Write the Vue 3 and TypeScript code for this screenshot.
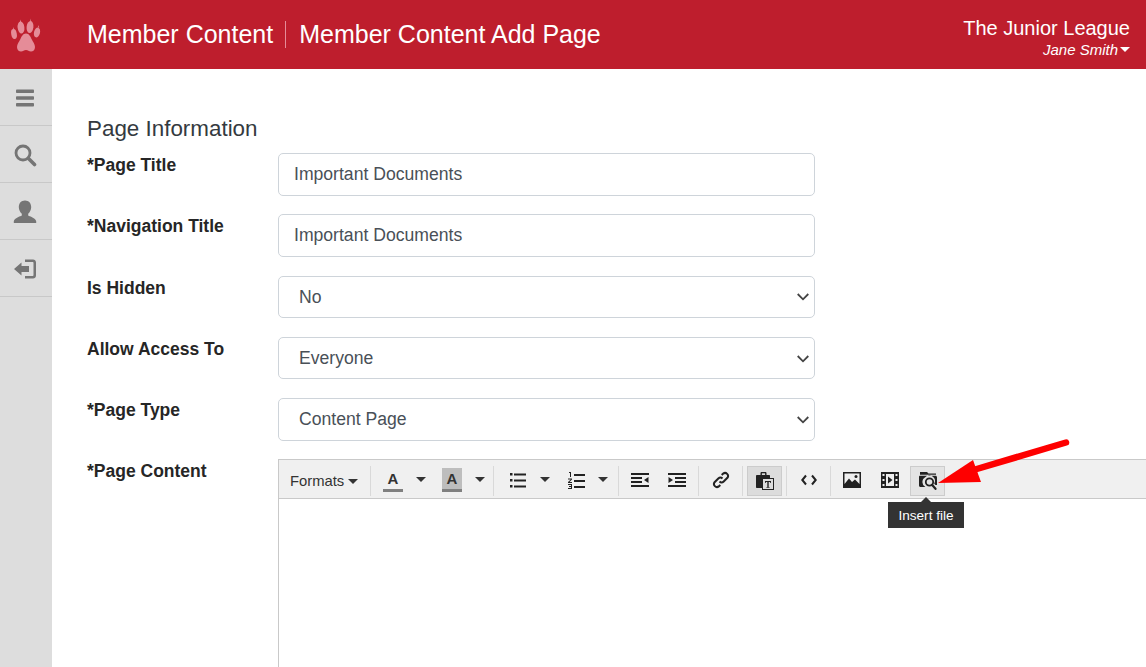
<script setup lang="ts">
interface Field { label: string; value: string; kind: 'input' | 'select' }
const fields: Field[] = [
  { label: '*Page Title', value: 'Important Documents', kind: 'input' },
  { label: '*Navigation Title', value: 'Important Documents', kind: 'input' },
  { label: 'Is Hidden', value: 'No', kind: 'select' },
  { label: 'Allow Access To', value: 'Everyone', kind: 'select' },
  { label: '*Page Type', value: 'Content Page', kind: 'select' },
]
</script>

<template>
  <div class="page">
    <header class="topbar">
      <div class="logo">
        <svg width="32" height="36" viewBox="0 0 32 36" fill="#e58c98">
          <ellipse cx="4" cy="17" rx="2.800" ry="5" transform="rotate(-10 4 17)"/>
          <ellipse cx="11" cy="10.500" rx="3.400" ry="6" transform="rotate(-6 11 10.500)"/>
          <ellipse cx="20" cy="10" rx="3.400" ry="6" transform="rotate(6 20 10)"/>
          <ellipse cx="27" cy="15.500" rx="3" ry="5" transform="rotate(14 27 15.500)"/>
          <path d="M16 16.500c3 0 4.500 3 5.800 6 1.100 2.500 3.200 4.500 3.200 7.500 0 3-2 4.500-4 4.500-2.200 0-3-1.600-5-1.600s-2.800 1.600-5 1.600c-2 0-4-1.500-4-4.500 0-3 2.100-5 3.200-7.500 1.300-3 2.800-6 5.800-6z"/>
          <path d="M3 12.500l.6-2.500.6 2.500zM10 5l.6-2.500.6 2.500zM20 4.500l.5-3 .5 3zM28 10.500l.6-2.500.6 2.500z"/>
        </svg>
      </div>
      <div class="crumbs">
        <span>Member Content</span>
        <span class="divider"></span>
        <span>Member Content Add Page</span>
      </div>
      <div class="account">
        <div class="org">The Junior League</div>
        <div class="user">Jane Smith<i class="caret"></i></div>
      </div>
    </header>

    <div class="body">
      <nav class="rail">
        <div class="rail-item">
          <svg width="20" height="20" viewBox="0 0 20 20" fill="#757575">
            <rect x="1" y="1.500" width="18" height="3.500" rx=".8"/>
            <rect x="1" y="8.300" width="18" height="3.500" rx=".8"/>
            <rect x="1" y="15" width="18" height="3.500" rx=".8"/>
          </svg>
        </div>
        <div class="rail-item">
          <svg width="24" height="24" viewBox="0 0 24 24" fill="none" stroke="#757575">
            <circle cx="10" cy="10" r="7" stroke-width="2.800"/>
            <path d="M15.500 15.500l6 6" stroke-width="3.600" stroke-linecap="round"/>
          </svg>
        </div>
        <div class="rail-item">
          <svg width="24" height="24" viewBox="0 0 24 24" fill="#757575">
            <path d="M12 .500c3.800 0 6.200 2.800 6.200 6.500 0 2.800-1.300 5.300-3 6.700v1.800c1.500 1 7.300 2.200 8 5.800v1.700H.800v-1.700c.7-3.600 6.500-4.800 8-5.800v-1.800c-1.700-1.400-3-3.900-3-6.700C5.800 3.300 8.200.500 12 .500z"/>
          </svg>
        </div>
        <div class="rail-item">
          <svg width="24" height="24" viewBox="0 0 24 24" fill="#757575">
            <path d="M12 2.500h8c1.700 0 3 1.300 3 3v13c0 1.700-1.300 3-3 3h-8v-2.500h7.500c.6 0 1-.4 1-1V6c0-.6-.4-1-1-1H12z"/>
            <path d="M1 12l7.500-6.500V9H16v6H8.500v3.500z"/>
          </svg>
        </div>
      </nav>

      <main class="content">
        <h2 class="section">Page Information</h2>
        <div v-for="f in fields" :key="f.label" class="row">
          <label class="label">{{ f.label }}</label>
          <div class="control" :class="{ sel: f.kind === 'select' }">
            <span>{{ f.value }}</span>
            <svg v-if="f.kind === 'select'" class="chev" width="12" height="8" viewBox="0 0 12 8" fill="none" stroke="#444" stroke-width="1.800">
              <path d="M.7 1L6 6.300 11.300 1"/>
            </svg>
          </div>
        </div>

        <div class="row editor-row">
          <label class="label">*Page Content</label>
          <div class="editor">
            <div class="toolbar">
              <span class="formats">Formats<i class="tcaret fm"></i></span>
              <span class="sep"></span>

              <span class="color c-a"><b>A</b><i></i></span>
              <i class="tcaret m13"></i>
              <span class="color shade m16"><b>A</b><i></i></span>
              <i class="tcaret m13"></i>
              <span class="sep m8"></span>

              <span class="tool w16 m16">
                <svg width="16" height="16" viewBox="0 0 16 16" fill="#222">
                  <rect x="0" y="1" width="2.500" height="2.500"/><rect x="0" y="7" width="2.500" height="2.500"/><rect x="0" y="13" width="2.500" height="2.500"/>
                  <rect x="4" y="1.500" width="12" height="2"/><rect x="4" y="7.500" width="12" height="2"/><rect x="4" y="13.500" width="12" height="2"/>
                </svg>
              </span>
              <i class="tcaret m14"></i>
              <span class="tool w17 m18">
                <svg width="17" height="17" viewBox="0 0 17 17" fill="#222">
                  <rect x="6" y="2" width="11" height="2"/><rect x="6" y="8" width="11" height="2"/><rect x="6" y="14" width="11" height="2"/>
                  <path d="M1 0h2v5H2V1H1zM0 6.500h4v1L1.500 10H4v1H0v-1l2.800-2.500H0zM0 12h4v5H0v-1h3v-1H1v-1h2v-1H0z"/>
                </svg>
              </span>
              <i class="tcaret m13"></i>
              <span class="sep m10"></span>

              <span class="tool w18 m12">
                <svg width="18" height="14" viewBox="0 0 18 14" fill="#222">
                  <rect y="0" width="18" height="2"/><rect y="4" width="11" height="2"/><rect y="8" width="11" height="2"/><rect y="12" width="18" height="2"/>
                  <path d="M17.500 4v6L13 7z"/>
                </svg>
              </span>
              <span class="tool w18 m19">
                <svg width="18" height="14" viewBox="0 0 18 14" fill="#222">
                  <rect y="0" width="18" height="2"/><rect x="7" y="4" width="11" height="2"/><rect x="7" y="8" width="11" height="2"/><rect y="12" width="18" height="2"/>
                  <path d="M.5 4v6L5 7z"/>
                </svg>
              </span>
              <span class="sep m12"></span>

              <span class="tool w18 m13">
                <svg width="18" height="18" viewBox="0 0 18 18" fill="none" stroke="#222" stroke-width="2">
                  <path d="M7.500 10.500a3 3 0 0 0 4.200 0l3.700-3.700a3 3 0 0 0-4.200-4.200L9.700 4"/>
                  <path d="M10.500 7.500a3 3 0 0 0-4.200 0l-3.700 3.700a3 3 0 0 0 4.200 4.200L8.300 14"/>
                </svg>
              </span>
              <span class="sep m12"></span>

              <span class="boxed active m4">
                <svg width="18" height="18" viewBox="0 0 18 18">
                  <path d="M1 3h3.500V1.200C4.500.6 5 0 5.600 0h3.800c.6 0 1.100.6 1.100 1.200V3H13c.8 0 1 .5 1 1v2H6v10H1c-.6 0-1-.4-1-1V4c0-.5.4-1 1-1z" fill="#222"/>
                  <rect x="5.900" y="1.300" width="3.200" height="1.700" fill="#dcdcdc"/>
                  <rect x="6.500" y="6.500" width="11" height="11" fill="#dcdcdc" stroke="#222"/>
                  <path d="M9 9h6v2h-.8v-1h-1.500v5H13.500v.8h-3V15h.8v-5H9.800v1H9z" fill="#222"/>
                </svg>
              </span>
              <span class="sep m4"></span>

              <span class="tool w16 m14">
                <svg width="16" height="12" viewBox="0 0 16 12" fill="none" stroke="#222" stroke-width="2">
                  <path d="M5 1.500L1.300 6 5 10.500M11 1.500L14.700 6 11 10.500"/>
                </svg>
              </span>
              <span class="sep m13"></span>

              <span class="tool w18 m12">
                <svg width="18" height="16" viewBox="0 0 18 16" fill="#222">
                  <path d="M0 0h18v16H0zM1.500 1.500v10.500l4.500-5.500 3 3.500 3-2.500 4.500 4.500V1.500z" fill-rule="evenodd"/>
                  <circle cx="13" cy="4.500" r="1.500"/>
                </svg>
              </span>
              <span class="tool w18 m20">
                <svg width="18" height="16" viewBox="0 0 18 16" fill="#222">
                  <path fill-rule="evenodd" d="M0 0h18v16H0zM1.500 2v2h2V2zM1.500 7v2h2V7zM1.500 12v2h2v-2zM14.500 2v2h2V2zM14.500 7v2h2V7zM14.500 12v2h2v-2zM5 2v12h8V2z"/>
                  <path d="M7 4.500v7L11.500 8z"/>
                </svg>
              </span>
              <span class="boxed hover m11">
                <svg width="18" height="18" viewBox="0 0 18 18" fill="#222">
                  <path d="M1 0h7l1.500 1.500H17v1.200H1z"/>
                  <path d="M1 3.800h15.500c.8 0 1.500.7 1.500 1.500V13h-1.500l-1.300-1.300a5.600 5.600 0 0 0-9-6.500 5.600 5.600 0 0 0 .2 9.800H1.500C.7 15 0 14.300 0 13.500V5c0-.7.4-1.200 1-1.200z"/>
                  <circle cx="10.500" cy="10" r="3.700" fill="#e4e4e4" stroke="#222" stroke-width="1.800"/>
                  <path d="M13 12.800l3.500 4" stroke="#222" stroke-width="2.200" stroke-linecap="round"/>
                </svg>
              </span>
              <div class="tip">Insert file</div>
            </div>
            <div class="edit-area"></div>
          </div>
        </div>
      </main>
    </div>

    <svg class="arrow" width="150" height="60" viewBox="0 0 150 60">
      <path d="M130 6.500L34 35" stroke="#fe0000" stroke-width="6.500" stroke-linecap="round" fill="none"/>
      <path d="M2 47L37 24l8 22z" fill="#fe0000"/>
    </svg>
  </div>
</template>

<style>
html, body { margin: 0; padding: 0; background: #fff; overflow: hidden; }
</style>

<style scoped>
.page { position: relative; width: 1146px; height: 667px; overflow: hidden; font-family: "Liberation Sans", Arial, sans-serif; color: #212529; }
.topbar { height: 69px; background: #be1e2d; color: #fff; display: flex; align-items: center; }
.logo { width: 87px; flex: none; display: flex; padding-left: 10px; box-sizing: border-box; }
.crumbs { display: flex; align-items: center; font-size: 25px; flex: 1; }
.divider { width: 1px; height: 27px; background: #e58c98; margin: 0 13px 0 12px; }
.account { text-align: right; padding-right: 16px; padding-top: 5px; }
.org { font-size: 20px; line-height: 24px; }
.user { font-size: 15px; font-style: italic; line-height: 18px; margin-top: 1px; display: flex; justify-content: flex-end; align-items: center; }
.caret { width: 0; height: 0; border: 5px solid transparent; border-top-color: #fff; border-bottom: 0; margin-left: 2px; }
.body { display: flex; height: 598px; }
.rail { width: 52px; flex: none; background: #ddd; }
.rail-item { height: 56px; border-bottom: 1px solid #c8c8c8; display: flex; align-items: center; justify-content: center; padding-right: 2px; }
.rail-item svg { margin-top: 2px; }
.content { flex: 1; padding: 45px 0 0 35px; min-width: 0; }
.section { font-size: 22.400px; font-weight: 400; line-height: 29px; margin: 0 0 10px; color: #343a40; height: 29px; }
.row { display: flex; margin-bottom: 18.300px; }
.label { width: 191px; flex: none; font-weight: 700; font-size: 17.500px; line-height: 24px; color: #262626; }
.control { width: 537px; height: 43px; box-sizing: border-box; border: 1px solid #ced4da; border-radius: 5px; display: flex; align-items: center; padding: 0 15px; font-size: 17.600px; color: #495057; }
.control.sel { height: 42.600px; margin-bottom: .4px; padding: 1px 5px 0 20px; justify-content: space-between; }
.chev { flex: none; }
.editor-row { margin: 0; }
.editor { width: 900px; flex: none; border: 1px solid #c9c9c9; border-right: 0; box-sizing: border-box; height: 300px; }
.toolbar { position: relative; height: 39px; box-sizing: border-box; padding-top: 4px; background: #f0f0f0; border-bottom: 1px solid #c9c9c9; display: flex; align-items: center; }
.formats { font-size: 14.800px; color: #333; width: 80px; margin-left: 11px; display: flex; align-items: center; flex: none; }
.sep { width: 1px; height: 30px; background: #d9d9d9; flex: none; }
.tool { display: flex; align-items: center; justify-content: center; flex: none; height: 24px; margin-top: -2px; }
.w16 { width: 16px; }
.w17 { width: 17px; }
.w18 { width: 18px; }
.m4 { margin-left: 4px; }
.m8 { margin-left: 8px; }
.m10 { margin-left: 10px; }
.m11 { margin-left: 11px; }
.m12 { margin-left: 12px; }
.m13 { margin-left: 13px; }
.m14 { margin-left: 14px; }
.m16 { margin-left: 16px; }
.m18 { margin-left: 18px; }
.m19 { margin-left: 19px; }
.m20 { margin-left: 20px; }
.tcaret { display: block; width: 0; height: 0; border: 5px solid transparent; border-top-color: #333; border-bottom: 0; flex: none; margin-top: -3px; }
.tcaret.fm { margin-left: 4px; margin-top: 0; }
.color { display: flex; flex-direction: column; width: 20px; height: 24px; flex: none; margin-top: -2px; }
.c-a { margin-left: 12px; }
.color b { font-size: 15px; line-height: 22px; height: 21px; color: #333; text-align: center; font-weight: 700; }
.color i { display: block; height: 3px; background: #808080; }
.shade b { background: #bdbdbd; }
.boxed { width: 35px; height: 30px; box-sizing: border-box; border: 1px solid #ccc; display: flex; align-items: center; justify-content: center; flex: none; }
.active { background: #dcdcdc; }
.hover { background: #e4e4e4; }
.tip { position: absolute; left: 609px; top: 42px; width: 76px; height: 26px; background: #333; color: #fff; font-size: 13.600px; line-height: 27px; text-align: center; }
.tip::before { content: ""; position: absolute; left: 33px; top: -5px; border: 5px solid transparent; border-top: 0; border-bottom-color: #333; }
.edit-area { background: #fff; height: 100%; }
.arrow { position: absolute; left: 936px; top: 436px; }
</style>
